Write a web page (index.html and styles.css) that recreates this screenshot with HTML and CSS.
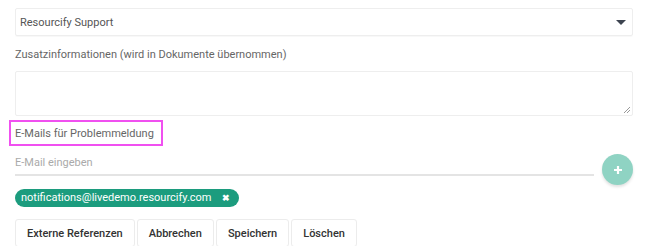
FILE: index.html
```html
<!DOCTYPE html>
<html>
<head>
<meta charset="utf-8">
<link rel="stylesheet" href="styles.css">
</head>
<body>
<div class="form">
  <div class="select">
    <span>Resourcify Support</span>
    <span class="caret"></span>
  </div>
  <div class="label">Zusatzinformationen (wird in Dokumente übernommen)</div>
  <div class="textarea">
    <svg class="grip" width="8" height="8" viewBox="0 0 8 8"><path d="M7 1L1 7M7 4L4 7" stroke="#999" stroke-width="1"/></svg>
  </div>
  <div class="highlight"><span>E-Mails für Problemmeldung</span></div>
  <div class="email-row">
    <div class="email-input">E-Mail eingeben</div>
    <div class="add-btn"><svg width="10" height="10" viewBox="0 0 10 10"><path d="M5 1v8M1 5h8" stroke="#fff" stroke-width="2.2"/></svg></div>
  </div>
  <div class="chips">
    <span class="chip">notifications@livedemo.resourcify.com <span class="x">✖</span></span>
  </div>
  <div class="buttons">
    <button class="btn">Externe Referenzen</button>
    <button class="btn">Abbrechen</button>
    <button class="btn">Speichern</button>
    <button class="btn">Löschen</button>
  </div>
</div>
</body>
</html>
```
FILE: styles.css
```css
* { box-sizing: border-box; }
html, body { margin: 0; padding: 0; background: #fff; }
body { font-family: Roboto, "Liberation Sans", sans-serif; color: #555; width: 670px; height: 246px; overflow: hidden; }
.form { padding: 8px 0 0 15px; width: 633px; }
.select {
  height: 28px; border: 1px solid #eeeeee; border-radius: 2px;
  display: flex; align-items: center; justify-content: space-between;
  padding: 0 5px 0 4px; font-size: 11px; color: #555;
  box-shadow: 0 1px 1px rgba(0,0,0,0.03);
}
.caret { width: 0; height: 0; border-left: 5px solid transparent; border-right: 5px solid transparent; border-top: 5px solid #3d4450; margin-right: 1px; }
.label { font-size: 11px; color: #666; margin-top: 11px; height: 15px; line-height: 15px; white-space: nowrap; }
.textarea { margin-top: 9px; height: 45px; border: 1px solid #eeeeee; border-radius: 2px; position: relative; }
.grip { position: absolute; right: 1px; bottom: 1px; }
.highlight { margin: 4px 0 0 -6px; width: 154px; height: 26px; border: 2px solid #f050f0; display: flex; align-items: center; padding-left: 4px; white-space: nowrap; }
.highlight span { font-size: 11px; color: #666; }
.email-row { display: flex; align-items: flex-start; margin-top: 8px; }
.email-input { width: 579px; height: 22px; border-bottom: 2px solid #e4e4e4; font-size: 11px; color: #aaa; padding-top: 2px; }
.add-btn { width: 31px; height: 31px; border-radius: 50%; background: #8fd3c3; margin: 0 0 0 8px; display: flex; align-items: center; justify-content: center; box-shadow: 0 2px 3px rgba(0,0,0,0.12); }
.chips { margin-top: 1px; height: 18px; }
.chip { display: inline-flex; align-items: center; height: 18px; border-radius: 9px; background: #1c9c7e; color: #fff; font-size: 11px; padding: 0 9px 0 6px; white-space: nowrap; }
.chip .x { font-size: 9px; margin-left: 10px; font-weight: bold; }
.buttons { display: flex; gap: 2px; margin-top: 15px; }
.btn { font-family: Roboto, "Liberation Sans", sans-serif; font-size: 11px; color: #333; font-weight: 500; background: #fff; border: 1px solid #ececec; border-radius: 3px; height: 28px; padding: 0 11px; }
```
